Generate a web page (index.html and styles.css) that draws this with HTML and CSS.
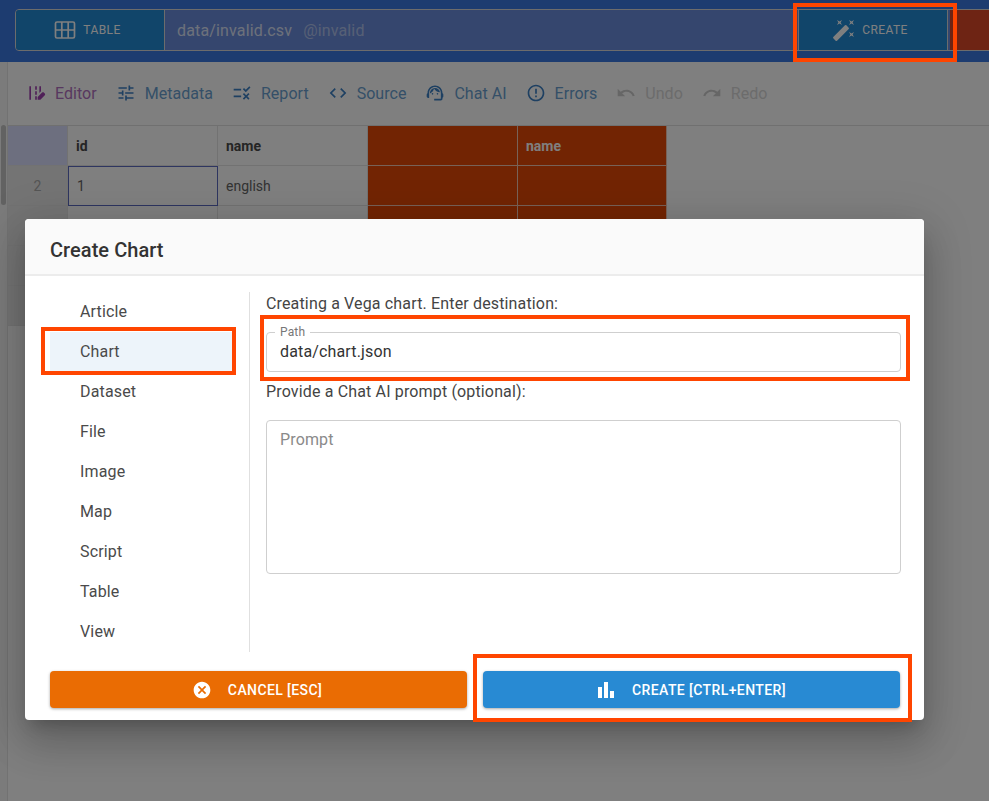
FILE: index.html
```html
<!DOCTYPE html>
<html lang="en">
<head>
    <meta charset="UTF-8">
    <meta name="viewport" content="width=device-width, initial-scale=1.0">
    <title>Create Chart</title>
    <link rel="stylesheet" href="styles.css">
</head>
<body>
    <div class="page">
        <header class="topbar">
            <div class="topbar-group">
                <div class="top-btn table-btn">
                    <svg class="top-icon line-icon" viewBox="0 0 24 24"><rect x="2.500" y="4" width="19" height="16" rx="1.500"/><path d="M2.500 12h19M8.800 4v16M15.200 4v16"/></svg>
                    <span>Table</span>
                </div>
                <div class="path-box"><span class="path-name">data/invalid.csv</span><span class="path-handle">@invalid</span></div>
                <div class="top-btn create-btn">
                    <svg class="top-icon" viewBox="0 0 24 24"><path d="M7.500 5.600 10 7 8.600 4.500 10 2 7.500 3.400 5 2l1.400 2.500L5 7zm12 9.800L17 14l1.400 2.500L17 19l2.500-1.400L22 19l-1.400-2.500L22 14zM22 2l-2.500 1.400L17 2l1.400 2.500L17 7l2.500-1.400L22 7l-1.400-2.500zm-7.630 5.290a.996.996 0 0 0-1.410 0L1.290 18.960c-.39.39-.39 1.020 0 1.410l2.340 2.340c.39.39 1.020.39 1.410 0L16.700 11.050c.39-.39.39-1.020 0-1.410l-2.330-2.350z"/></svg>
                    <span>Create</span>
                </div>
                <div class="top-btn danger-btn"></div>
            </div>
        </header>

        <div class="workspace">
            <div class="scroll-rail"><div class="scroll-thumb"></div></div>
            <div class="content">
                <nav class="toolbar">
                    <div class="tool active"><svg viewBox="0 0 24 24"><path d="M18 4h-2v7.900l2-2V4zM4 4h2v16H4V4zm7 0h2v4h-2V4zm0 6h2v4h-2v-4zm0 6h2v4h-2v-4zm11.560-3.410-1.150-1.150c-.59-.59-1.540-.59-2.120 0L14 16.760V20h3.240l5.320-5.320c.59-.58.59-1.530 0-2.090z"/></svg>Editor</div>
                    <div class="tool"><svg viewBox="0 0 24 24"><path d="M3 17v2h6v-2H3zM3 5v2h10V5H3zm10 16v-2h8v-2h-8v-2h-2v6h2zM7 9v2H3v2h4v2h2V9H7zm14 4v-2H11v2h10zm-6-4h2V7h4V5h-4V3h-2v6z"/></svg>Metadata</div>
                    <div class="tool"><svg viewBox="0 0 24 24"><path d="M16.540 11 13 7.460l1.410-1.410 2.120 2.120 4.240-4.240 1.410 1.410L16.540 11zM11 7H2v2h9V7zm10 6.410L19.590 12 17 14.590 14.410 12 13 13.410 15.590 16 13 18.590 14.410 20 17 17.410 19.590 20 21 18.590 18.410 16 21 13.410zM11 15H2v2h9v-2z"/></svg>Report</div>
                    <div class="tool"><svg viewBox="0 0 24 24"><path d="M9.400 16.600 4.800 12l4.600-4.600L8 6l-6 6 6 6 1.400-1.400zm5.200 0 4.600-4.600-4.600-4.600L16 6l6 6-6 6-1.400-1.400z"/></svg>Source</div>
                    <div class="tool"><svg viewBox="0 0 24 24"><path d="M21 12.220C21 6.730 16.740 3 12 3c-4.690 0-9 3.650-9 9.280-.6.34-1 .98-1 1.720v2c0 1.100.9 2 2 2h1v-6.100c0-3.870 3.130-7 7-7s7 3.130 7 7V19h-8v2h8c1.100 0 2-.9 2-2v-1.220c.59-.31 1-.92 1-1.640v-2.300c0-.7-.41-1.310-1-1.620z"/><circle cx="9" cy="13" r="1"/><circle cx="15" cy="13" r="1"/><path d="M18 11.030C17.520 8.180 15.040 6 12.050 6c-3.030 0-6.290 2.510-6.030 6.450 2.470-1.010 4.330-3.210 4.860-5.890 1.310 2.630 4 4.440 7.120 4.470z"/></svg>Chat AI</div>
                    <div class="tool"><svg viewBox="0 0 24 24"><path d="M11 15h2v2h-2zm0-8h2v6h-2zm.99-5C6.470 2 2 6.480 2 12s4.470 10 9.990 10C17.520 22 22 17.520 22 12S17.520 2 11.990 2zM12 20c-4.420 0-8-3.580-8-8s3.580-8 8-8 8 3.580 8 8-3.580 8-8 8z"/></svg>Errors</div>
                    <div class="tool disabled"><svg viewBox="0 0 24 24"><path d="M12.500 8c-2.650 0-5.050.99-6.900 2.600L2 7v9h9l-3.620-3.620c1.390-1.160 3.160-1.880 5.120-1.880 3.540 0 6.550 2.310 7.600 5.500l2.370-.78C21.080 11.030 17.150 8 12.500 8z"/></svg>Undo</div>
                    <div class="tool disabled"><svg viewBox="0 0 24 24"><path d="M18.400 10.600C16.550 8.990 14.150 8 11.500 8c-4.650 0-8.580 3.030-9.960 7.220L3.900 16c1.050-3.190 4.050-5.500 7.600-5.500 1.950 0 3.730.72 5.120 1.880L13 16h9V7l-3.600 3.600z"/></svg>Redo</div>
                </nav>

                <main class="grid">
                    <div class="cell corner"></div>
                    <div class="cell head">id</div>
                    <div class="cell head">name</div>
                    <div class="cell error"></div>
                    <div class="cell error head">name</div>

                    <div class="cell rownum">2</div>
                    <div class="cell picked">1</div>
                    <div class="cell">english</div>
                    <div class="cell error"></div>
                    <div class="cell error"></div>

                    <div class="cell rownum"></div>
                    <div class="cell"></div>
                    <div class="cell"></div>
                    <div class="cell error"></div>
                    <div class="cell error"></div>

                    <div class="cell rownum"></div>
                    <div class="cell"></div>
                    <div class="cell"></div>
                    <div class="cell error"></div>
                    <div class="cell error"></div>

                    <div class="cell rownum"></div>
                    <div class="cell"></div>
                    <div class="cell"></div>
                    <div class="cell error"></div>
                    <div class="cell error"></div>
                </main>
            </div>
        </div>

        <div class="backdrop"></div>

        <section class="dialog">
            <h2 class="dialog-title">Create Chart</h2>
            <div class="dialog-body">
                <ul class="type-list">
                    <li>Article</li>
                    <li class="selected">Chart</li>
                    <li>Dataset</li>
                    <li>File</li>
                    <li>Image</li>
                    <li>Map</li>
                    <li>Script</li>
                    <li>Table</li>
                    <li>View</li>
                </ul>
                <div class="form">
                    <p class="form-label">Creating a Vega chart. Enter destination:</p>
                    <div class="field path-field">
                        <span class="legend">Path</span>
                        data/chart.json
                    </div>
                    <p class="form-label prompt-label">Provide a Chat AI prompt (optional):</p>
                    <div class="field prompt-field">Prompt</div>
                </div>
            </div>
            <div class="dialog-actions">
                <div class="action cancel">
                    <svg viewBox="0 0 24 24"><path d="M12 2C6.470 2 2 6.470 2 12s4.470 10 10 10 10-4.470 10-10S17.530 2 12 2zm5 13.590L15.590 17 12 13.410 8.410 17 7 15.590 10.590 12 7 8.410 8.410 7 12 10.590 15.590 7 17 8.410 13.410 12 17 15.590z"/></svg>
                    Cancel [Esc]
                </div>
                <div class="action confirm">
                    <svg viewBox="0 0 24 24"><path d="M4 9h4v11H4zM16 13h4v7h-4zM10 4h4v16h-4z"/></svg>
                    Create [Ctrl+Enter]
                </div>
            </div>
        </section>

        <div class="mark mark-create"></div>
        <div class="mark mark-chart"></div>
        <div class="mark mark-path"></div>
        <div class="mark mark-confirm"></div>
    </div>
</body>
</html>
```

FILE: styles.css
```css
* {
    box-sizing: border-box;
}
html, body {
    margin: 0;
    height: 100%;
    overflow: hidden;
}
body {
    font-family: Roboto, "Liberation Sans", sans-serif;
    background-color: #ffffff;
    color: #333333;
}
.page {
    position: relative;
    width: 989px;
    height: 801px;
    overflow: hidden;
}

/* top bar */
.topbar {
    height: 62px;
    padding: 9px 0 0 15px;
    background-color: #3a79e0;
}
.topbar-group {
    display: flex;
    width: 1000px;
    height: 42px;
    background-color: #6a8cdc;
    border: 1px solid #d8d8d8;
    border-radius: 4px;
}
.top-btn {
    display: flex;
    align-items: center;
    justify-content: center;
    gap: 6px;
    padding-right: 6px;
    background-color: #238ad4;
    color: #ffffff;
    font-size: 12px;
    text-transform: uppercase;
    letter-spacing: 0.4px;
}
.top-icon {
    width: 24px;
    height: 24px;
    fill: #ffffff;
}
.line-icon {
    fill: none;
    stroke: #ffffff;
    stroke-width: 1.700;
}
.table-btn {
    width: 149px;
    border-right: 1px solid #d8d8d8;
    border-radius: 3px 0 0 3px;
}
.path-box {
    flex: 1;
    display: flex;
    align-items: center;
    gap: 11px;
    padding-left: 12px;
    font-size: 16px;
    letter-spacing: 0.15px;
    color: #ffffff;
}
.path-name {
    opacity: 0.75;
}
.path-handle {
    opacity: 0.45;
}
.create-btn {
    width: 150px;
    border-left: 1px solid #d8d8d8;
    border-right: 1px solid #d8d8d8;
}
.danger-btn {
    width: 64px;
    margin-left: 2px;
    background-color: #dc4829;
}

/* page under the top bar */
.workspace {
    display: flex;
    height: 739px;
}
.scroll-rail {
    width: 8px;
    background-color: #f6f6f6;
    border-right: 1px solid #e4e4e4;
}
.scroll-thumb {
    width: 5px;
    height: 80px;
    margin: 63px 0 0 1px;
    border-radius: 3px;
    background-color: #c4c4c4;
}
.content {
    flex: 1;
}

/* toolbar */
.toolbar {
    display: flex;
    align-items: center;
    gap: 19px;
    height: 64px;
    padding: 0 0 1px 18px;
    border-bottom: 1px solid #e0e0e0;
}
.tool {
    display: flex;
    align-items: center;
    gap: 9px;
    font-size: 16px;
    letter-spacing: 0.03px;
    color: #6a9fd0;
}
.tool svg {
    width: 20px;
    height: 20px;
    fill: #3d80c4;
}
.tool.active {
    color: #b070c0;
}
.tool.active svg {
    fill: #a040b0;
}
.tool.disabled {
    color: #d8d8d8;
}
.tool.disabled svg {
    fill: #cccccc;
}

/* table behind the dialog */
.grid {
    display: grid;
    grid-template-columns: 60px 150px 150px 150px 149px;
    grid-auto-rows: 40px;
}
.cell {
    display: flex;
    align-items: center;
    padding: 0 8px;
    font-size: 14px;
    color: #666666;
    border-right: 1px solid #e4e4e4;
    border-bottom: 1px solid #e4e4e4;
}
.corner {
    background-color: #dadfff;
}
.head {
    font-weight: 700;
    color: #4a4a4a;
}
.rownum {
    justify-content: center;
    background-color: #e8e8e8;
    color: #aaaaaa;
}
.picked {
    border: 1px solid #5c6bc0;
}
.error {
    background-color: #e44806;
    color: #ffffff;
    border-color: #f0c4b0;
}

/* dialog */
.backdrop {
    position: absolute;
    inset: 0;
    background-color: rgba(0, 0, 0, 0.5);
}
.dialog {
    position: absolute;
    left: 25px;
    top: 219px;
    width: 899px;
    height: 501px;
    display: flex;
    flex-direction: column;
    background-color: #ffffff;
    border-radius: 4px;
    box-shadow: 0 11px 15px -7px rgba(0, 0, 0, 0.2), 0 24px 38px 3px rgba(0, 0, 0, 0.14), 0 9px 46px 8px rgba(0, 0, 0, 0.12);
}
.dialog-title {
    margin: 0;
    height: 57px;
    padding: 0 25px;
    line-height: 63px;
    font-size: 20px;
    font-weight: 500;
    letter-spacing: 0.05px;
    color: #333333;
    background-color: #fafafa;
    border-bottom: 2px solid #ececec;
    border-radius: 4px 4px 0 0;
}
.dialog-body {
    display: flex;
    padding: 16px 23px 0 25px;
    height: 395px;
}
.type-list {
    list-style: none;
    margin: 0;
    padding: 0 17px 0 0;
    width: 200px;
    height: 360px;
    border-right: 1px solid #e0e0e0;
}
.type-list li {
    height: 40px;
    line-height: 39px;
    padding-left: 30px;
    font-size: 16px;
    letter-spacing: 0.15px;
    color: #4a4a4a;
}
.type-list .selected {
    background-color: #edf4fa;
}
.form {
    flex: 1;
    padding-left: 16px;
}
.form-label {
    margin: 0;
    height: 24px;
    line-height: 24px;
    font-size: 16px;
    letter-spacing: 0.15px;
    color: #444444;
}
.field {
    position: relative;
    border: 1px solid #cfcfcf;
    border-radius: 4px;
    padding-left: 13px;
    font-size: 16px;
    letter-spacing: 0.15px;
}
.path-field {
    height: 40px;
    margin-top: 16px;
    line-height: 38px;
    color: #333333;
}
.legend {
    position: absolute;
    left: 8px;
    top: -8px;
    padding: 0 5px;
    background-color: #ffffff;
    font-size: 12px;
    line-height: 14px;
    color: #777777;
}
.prompt-label {
    margin-top: 8px;
}
.prompt-field {
    height: 154px;
    margin-top: 16px;
    padding-top: 9px;
    color: #8a8a8a;
}
.dialog-actions {
    display: flex;
    gap: 16px;
    padding: 0 24px 0 25px;
}
.action {
    flex: 1;
    display: flex;
    align-items: center;
    justify-content: center;
    gap: 16px;
    height: 37px;
    padding-right: 3px;
    border-radius: 4px;
    color: #ffffff;
    font-size: 14px;
    font-weight: 500;
    letter-spacing: 0.4px;
    text-transform: uppercase;
    box-shadow: 0 1px 3px rgba(0, 0, 0, 0.35);
}
.action svg {
    width: 20px;
    height: 20px;
    fill: #ffffff;
}
.confirm svg {
    width: 24px;
    height: 24px;
    margin-right: -2px;
}
.cancel {
    background-color: #ea6c03;
}
.confirm {
    background-color: #288ad3;
}

/* red callouts drawn over the shot */
.mark {
    position: absolute;
    border: 4px solid #ff4500;
}
.mark-create {
    left: 793px;
    top: 3px;
    width: 164px;
    height: 59px;
}
.mark-chart {
    left: 41px;
    top: 327px;
    width: 195px;
    height: 48px;
}
.mark-path {
    left: 260px;
    top: 315px;
    width: 650px;
    height: 66px;
}
.mark-confirm {
    left: 473px;
    top: 654px;
    width: 439px;
    height: 68px;
}
```
